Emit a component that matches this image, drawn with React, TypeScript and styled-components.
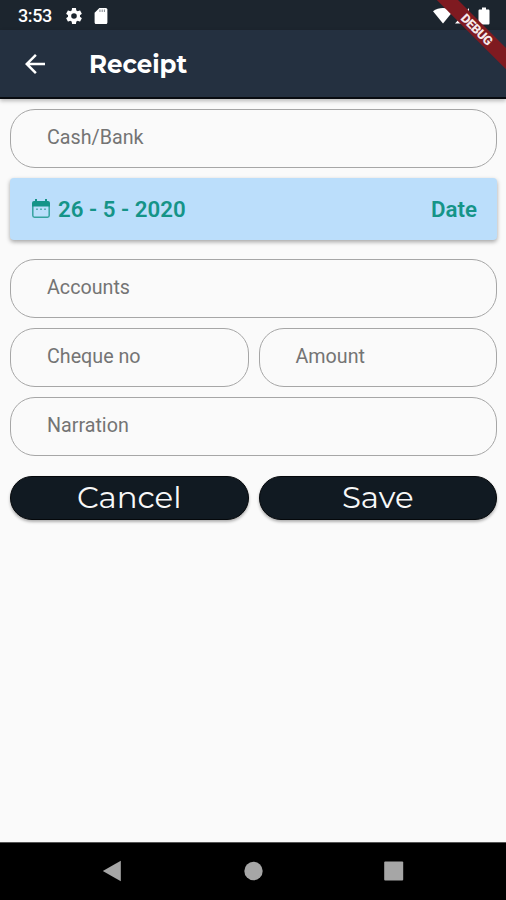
import React from 'react';
import styled, { createGlobalStyle } from 'styled-components';

const GlobalStyle = createGlobalStyle`
  *, *::before, *::after { box-sizing: border-box; }
  body { margin: 0; background: #fafafa; font-family: Roboto, sans-serif; }
`;

const Screen = styled.div`
  position: relative;
  display: flex;
  flex-direction: column;
  width: 506px;
  height: 900px;
  overflow: hidden;
  background: #fafafa;
`;

const StatusBar = styled.header`
  display: flex;
  align-items: center;
  height: 30px;
  flex: none;
  padding: 2px 13px 0 18px;
  background: #1c252e;
  color: #fff;
`;

const Clock = styled.span`
  width: 48px;
  font-size: 18px;
  font-weight: 500;
  line-height: 28px;
  letter-spacing: -0.4px;
`;

const StatusIcon = styled.svg<{ $size: number; $gap?: number }>`
  display: block;
  flex: none;
  width: ${(p) => p.$size}px;
  height: ${(p) => p.$size}px;
  margin-left: ${(p) => p.$gap ?? 0}px;
  margin-bottom: 1px;
  fill: #fff;
`;

const Spacer = styled.div`
  flex: 1;
`;

const AppBar = styled.div`
  position: relative;
  display: flex;
  align-items: center;
  height: 69px;
  flex: none;
  padding-left: 20px;
  background: #243040;
  border-bottom: 2px solid #080b10;
  box-shadow: 0 2px 4px rgba(0, 0, 0, 0.26);
`;

const BackButton = styled.button`
  display: flex;
  padding: 1px 0 0;
  border: 0;
  background: none;
  svg { width: 30px; height: 30px; fill: #fff; }
`;

const Title = styled.h1`
  margin: 1px 0 0 39px;
  color: #fff;
  font: 700 24.5px/30px Montserrat, Inter, sans-serif;
`;

const DebugRibbon = styled.div`
  position: absolute;
  top: 22px;
  left: 417px;
  width: 120px;
  height: 14.5px;
  transform: rotate(45deg);
  background: #7f1a20;
  color: #f6e9ea;
  font-size: 12.6px;
  font-weight: 900;
  line-height: 15px;
  letter-spacing: -0.4px;
  text-align: center;
`;

const Form = styled.main`
  display: grid;
  flex: 1;
  grid-template-columns: 1fr 1fr;
  align-content: start;
  gap: 10px;
  padding: 10px 9px 0 10px;
`;

const Field = styled.label<{ $wide?: boolean }>`
  display: block;
  grid-column: ${(p) => (p.$wide ? '1 / -1' : 'auto')};
  height: 59px;
  padding: 0 20px 0 36px;
  border: 1px solid #a6a6a6;
  border-radius: 25px;
  color: #747474;
  font-size: 19.7px;
  line-height: 56px;
`;

const DateCard = styled.button`
  display: flex;
  grid-column: 1 / -1;
  align-items: center;
  height: 62px;
  margin: 0 0 9px;
  padding: 0 20px;
  border: 0;
  border-radius: 4px;
  background: #bbdefb;
  box-shadow: 0 2px 4px rgba(0, 0, 0, 0.34);
  color: #159488;
  font: 600 22.3px/30px Roboto, sans-serif;
`;

const CalendarIcon = styled.svg`
  width: 22px;
  height: 22px;
  margin-right: 6px;
  fill: currentColor;
`;

const ActionButton = styled.button`
  height: 44px;
  margin-top: 10px;
  padding: 0 0 2px;
  border: 1.5px solid #05080b;
  border-radius: 22px;
  background: #111a22;
  box-shadow: 0 2px 3px rgba(0, 0, 0, 0.3);
  color: #f8f8f8;
  font: 400 30.8px/40px Montserrat, Inter, sans-serif;
`;

const NavBar = styled.nav`
  display: flex;
  align-items: center;
  justify-content: space-between;
  height: 58px;
  flex: none;
  padding: 0 102px 2px 102px;
  background: #000;
  border-top: 1px solid #555;
  svg { width: 20px; height: 22px; fill: #a6a6a6; }
`;

export default function App() {
  return (
    <>
      <GlobalStyle />
      <Screen>
        <StatusBar>
          <Clock>3:53</Clock>
          <StatusIcon $size={16} viewBox="2 2 20 20">
            <path d="M19.43 12.98c.04-.32.07-.64.07-.98s-.03-.66-.07-.98l2.11-1.65c.19-.15.24-.42.12-.64l-2-3.46c-.12-.22-.39-.3-.61-.22l-2.49 1c-.52-.4-1.08-.73-1.69-.98l-.38-2.65C14.46 2.18 14.25 2 14 2h-4c-.25 0-.46.18-.49.42l-.38 2.65c-.61.25-1.17.59-1.69.98l-2.49-1c-.23-.09-.49 0-.61.22l-2 3.46c-.13.22-.07.49.12.64l2.11 1.65c-.04.32-.07.65-.07.98s.03.66.07.98l-2.11 1.65c-.19.15-.24.42-.12.64l2 3.46c.12.22.39.3.61.22l2.49-1c.52.4 1.08.73 1.69.98l.38 2.65c.03.24.24.42.49.42h4c.25 0 .46-.18.49-.42l.38-2.65c.61-.25 1.17-.59 1.69-.98l2.49 1c.23.09.49 0 .61-.22l2-3.46c.12-.22.07-.49-.12-.64l-2.11-1.65zM12 15.5a3.5 3.5 0 1 1 0-7 3.5 3.5 0 0 1 0 7z" />
          </StatusIcon>
          <StatusIcon $size={16} $gap={11} viewBox="2 2 20 20">
            <path d="M18 2h-8L4 8v12c0 1.1.9 2 2 2h12c1.1 0 2-.9 2-2V4c0-1.1-.9-2-2-2z" />
            <path d="M10 4h1.4v3H10zM12.8 4h1.4v3h-1.4zM15.6 4H17v3h-1.4z" fill="#8b9197" />
          </StatusIcon>
          <Spacer />
          <StatusIcon $size={20} viewBox="0 0 20 20">
            <path d="M0 5.2C5.8.8 14.2.8 20 5.2L10 17.5z" />
          </StatusIcon>
          <StatusIcon $size={16} $gap={2} viewBox="0 0 16 16">
            <path d="M0 15.5h14V0z" />
          </StatusIcon>
          <StatusIcon $size={18} $gap={4} viewBox="0 0 18 18">
            <path d="M7 .5h4v2h2.2c.8 0 1.3.5 1.3 1.3v12.4c0 .8-.5 1.3-1.3 1.3H4.8c-.8 0-1.3-.5-1.3-1.3V3.8c0-.8.5-1.3 1.3-1.3H7z" />
          </StatusIcon>
        </StatusBar>
        <AppBar>
          <BackButton aria-label="Back">
            <svg viewBox="0 0 24 24">
              <path d="M20 11H7.83l5.59-5.59L12 4l-8 8 8 8 1.41-1.41L7.83 13H20v-2z" />
            </svg>
          </BackButton>
          <Title>Receipt</Title>
        </AppBar>
        <Form>
          <Field $wide>Cash/Bank</Field>
          <DateCard>
            <CalendarIcon viewBox="0 0 22 22">
              <path d="M4 3h1V1h2v2h8V1h2v2h1a2 2 0 0 1 2 2v3.5H2V5a2 2 0 0 1 2-2z" />
              <path d="M2.8 7v10.5c0 1 .7 1.7 1.7 1.7h13c1 0 1.7-.7 1.7-1.7V7" fill="none" stroke="currentColor" strokeWidth="1.5" opacity=".8" />
              <path d="M6 10.5h2V12H6zm4 0h2V12h-2zm4 0h2V12h-2z" opacity=".6" />
            </CalendarIcon>
            26 - 5 - 2020
            <Spacer />
            Date
          </DateCard>
          <Field $wide>Accounts</Field>
          <Field>Cheque no</Field>
          <Field>Amount</Field>
          <Field $wide>Narration</Field>
          <ActionButton>Cancel</ActionButton>
          <ActionButton>Save</ActionButton>
        </Form>
        <NavBar>
          <svg viewBox="0 0 20 22"><path d="M.8 11 18.8.7v20.6z" /></svg>
          <svg viewBox="0 0 20 22"><circle cx="10.5" cy="11" r="9.2" /></svg>
          <svg viewBox="0 0 20 22"><rect x=".2" y="1.5" width="19" height="19" rx="1" /></svg>
        </NavBar>
        <DebugRibbon>DEBUG</DebugRibbon>
      </Screen>
    </>
  );
}
